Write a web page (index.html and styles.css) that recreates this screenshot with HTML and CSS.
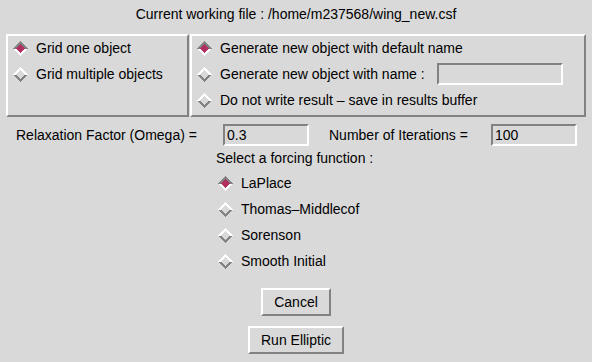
FILE: index.html
```html
<!DOCTYPE html>
<html>
<head>
<meta charset="utf-8">
<link rel="stylesheet" href="styles.css">
</head>
<body>
<svg class="defs" width="0" height="0">
  <symbol id="on" viewBox="0 0 15 15">
    <polygon points="0,7.5 7.5,0 15,7.5 12,7.5 7.5,3 3,7.5" fill="#828282"/>
    <polygon points="0,7.5 7.5,15 15,7.5 12,7.5 7.5,12 3,7.5" fill="#ffffff"/>
    <polygon points="3,7.5 7.5,3 12,7.5 7.5,12" fill="#b03060"/>
  </symbol>
  <symbol id="off" viewBox="0 0 15 15">
    <polygon points="0,7.5 7.5,0 15,7.5 12,7.5 7.5,3 3,7.5" fill="#ffffff"/>
    <polygon points="0,7.5 7.5,15 15,7.5 12,7.5 7.5,12 3,7.5" fill="#828282"/>
  </symbol>
</svg>
<div class="win">
  <div class="title">Current working file : /home/m237568/wing_new.csf</div>
  <div class="top">
    <div class="frame left">
      <div class="radio"><svg class="dia"><use href="#on"/></svg><span>Grid one object</span></div>
      <div class="radio"><svg class="dia"><use href="#off"/></svg><span>Grid multiple objects</span></div>
    </div>
    <div class="frame right">
      <div class="radio"><svg class="dia"><use href="#on"/></svg><span>Generate new object with default name</span></div>
      <div class="radio"><svg class="dia"><use href="#off"/></svg><span class="namelbl">Generate new object with name :</span><div class="entry name"></div></div>
      <div class="radio"><svg class="dia"><use href="#off"/></svg><span>Do not write result &ndash; save in results buffer</span></div>
    </div>
  </div>
  <div class="params">
    <span class="lbl1">Relaxation Factor (Omega) =</span>
    <div class="entry num">0.3</div>
    <span class="lbl2">Number of Iterations =</span>
    <div class="entry num">100</div>
  </div>
  <div class="forcing">
    <div class="flabel">Select a forcing function :</div>
    <div class="radio"><svg class="dia"><use href="#on"/></svg><span>LaPlace</span></div>
    <div class="radio"><svg class="dia"><use href="#off"/></svg><span>Thomas&ndash;Middlecof</span></div>
    <div class="radio"><svg class="dia"><use href="#off"/></svg><span>Sorenson</span></div>
    <div class="radio"><svg class="dia"><use href="#off"/></svg><span>Smooth Initial</span></div>
  </div>
  <div class="buttons">
    <div class="btn cancel">Cancel</div>
    <div class="btn run">Run Elliptic</div>
  </div>
</div>
</body>
</html>
```
FILE: styles.css
```css
html, body {
  margin: 0;
  padding: 0;
  background: #d9d9d9;
}
.defs {
  position: absolute;
  width: 0;
  height: 0;
}
.win {
  width: 592px;
  height: 362px;
  font-family: "Liberation Sans", Arial, sans-serif;
  font-size: 14px;
  color: #000;
}
.title {
  height: 28px;
  line-height: 28px;
  text-align: center;
}
.top {
  display: flex;
  margin: 6px 0 0 6px;
  gap: 1px;
}
.frame {
  box-sizing: border-box;
  height: 83px;
  border: 2px solid;
  border-color: #ffffff #828282 #828282 #ffffff;
  padding: 0 0 0 5px;
}
.left { width: 183px; }
.right { width: 396px; }
.radio {
  display: flex;
  align-items: center;
  height: 26px;
}
.frame .radio:first-child { margin-top: -1px; }
.dia {
  width: 15px;
  height: 15px;
  flex: none;
  margin-right: 8px;
  shape-rendering: crispEdges;
}
.entry {
  box-sizing: border-box;
  height: 22px;
  border: 2px solid;
  border-color: #828282 #ffffff #ffffff #828282;
  line-height: 18px;
  padding-left: 2px;
}
.namelbl { width: 217px; }
.name { width: 126px; }
.params {
  display: flex;
  align-items: center;
  margin-top: 7px;
  padding-left: 16px;
}
.lbl1 { width: 207px; }
.lbl2 { width: 162px; margin-left: 20px; }
.num { width: 86px; }
.forcing {
  padding-left: 216px;
}
.flabel {
  height: 24px;
  line-height: 24px;
}
.forcing .radio { padding-left: 2px; }
.buttons {
  display: flex;
  flex-direction: column;
  align-items: center;
}
.btn {
  box-sizing: border-box;
  height: 28px;
  line-height: 24px;
  text-align: center;
  border: 2px solid;
  border-color: #ffffff #828282 #828282 #ffffff;
}
.cancel { width: 70px; margin-top: 14px; }
.run { width: 96px; margin-top: 10px; }
```
